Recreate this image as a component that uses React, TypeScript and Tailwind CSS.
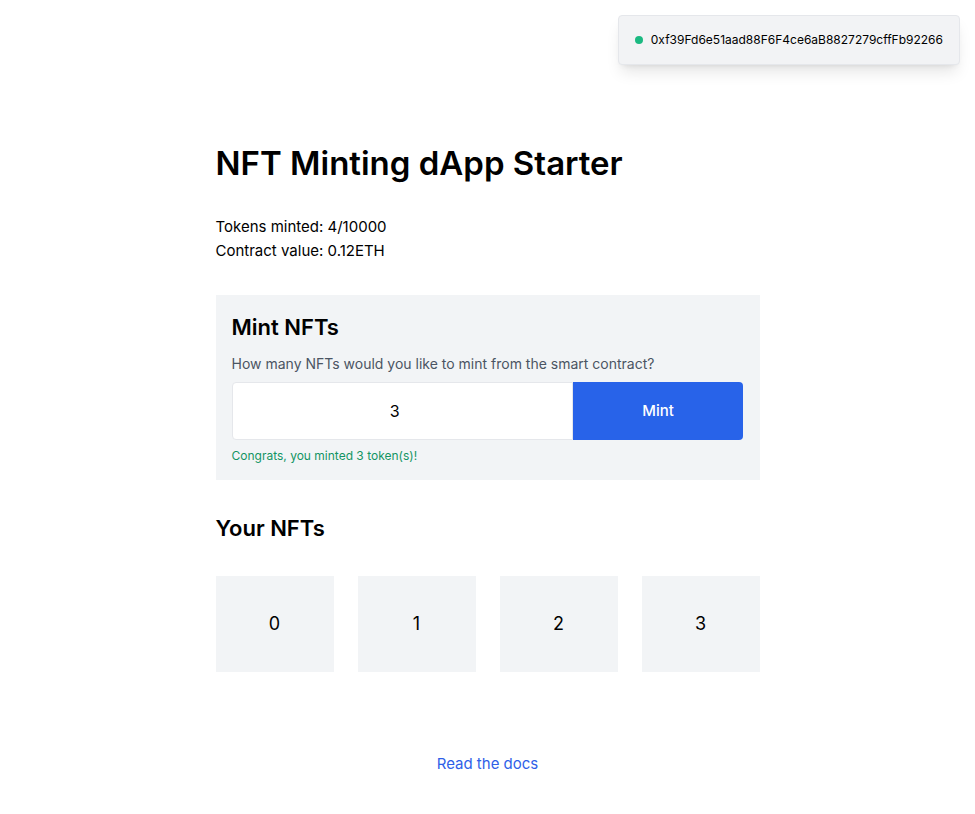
import React, { useState } from "react";

const tokens = [0, 1, 2, 3];

export default function App() {
  const [amount, setAmount] = useState("3");

  return (
    <div className="min-h-screen bg-white font-['Inter','Liberation_Sans',sans-serif] text-[15px] leading-6 text-black">
      <div className="flex justify-end px-[15px] pt-[15px]">
        <div className="flex items-center gap-2 rounded-sm border border-[#e5e7eb] bg-[#f2f3f5] p-4 text-xs shadow-lg">
          <span className="size-2 rounded-full bg-[#1bb981]" />
          <span>0xf39Fd6e51aad88F6F4ce6aB8827279cffFb92266</span>
        </div>
      </div>

      <main className="mx-auto mt-[78px] w-full max-w-[576px] px-4">
        <h1 className="text-[33px] leading-10 font-semibold">NFT Minting dApp Starter</h1>

        <div className="mt-8">
          <p>Tokens minted: 4/10000</p>
          <p>Contract value: 0.12ETH</p>
        </div>

        <form className="mt-8 bg-[#f2f4f6] p-4" onSubmit={(e) => e.preventDefault()}>
          <h2 className="text-[22px] leading-8 font-semibold">Mint NFTs</h2>
          <label htmlFor="amount" className="mt-[11px] block text-sm text-[#4b5563]">
            How many NFTs would you like to mint from the smart contract?
          </label>
          <div className="mt-2 flex">
            <input
              id="amount"
              type="number"
              min="1"
              value={amount}
              onChange={(e) => setAmount(e.target.value)}
              className="h-[58px] w-2/3 rounded-l-sm border border-[#e5e7eb] bg-white text-center text-base"
            />
            <button type="submit" className="h-[58px] w-1/3 rounded-r-sm bg-[#2863e9] font-medium text-white">
              Mint
            </button>
          </div>
          <p className="mt-2 text-xs text-[#149464]">Congrats, you minted 3 token(s)!</p>
        </form>

        <section className="mt-8">
          <h2 className="text-[22px] leading-8 font-semibold">Your NFTs</h2>
          <div className="mt-8 grid grid-cols-4 gap-6">
            {tokens.map((id) => (
              <div key={id} className="flex h-24 items-center justify-center bg-[#f2f4f6] text-lg">
                {id}
              </div>
            ))}
          </div>
        </section>

        <footer className="mt-20 pb-8 text-center">
          <a href="#docs" className="text-[#2f5fe8]">Read the docs</a>
        </footer>
      </main>
    </div>
  );
}
